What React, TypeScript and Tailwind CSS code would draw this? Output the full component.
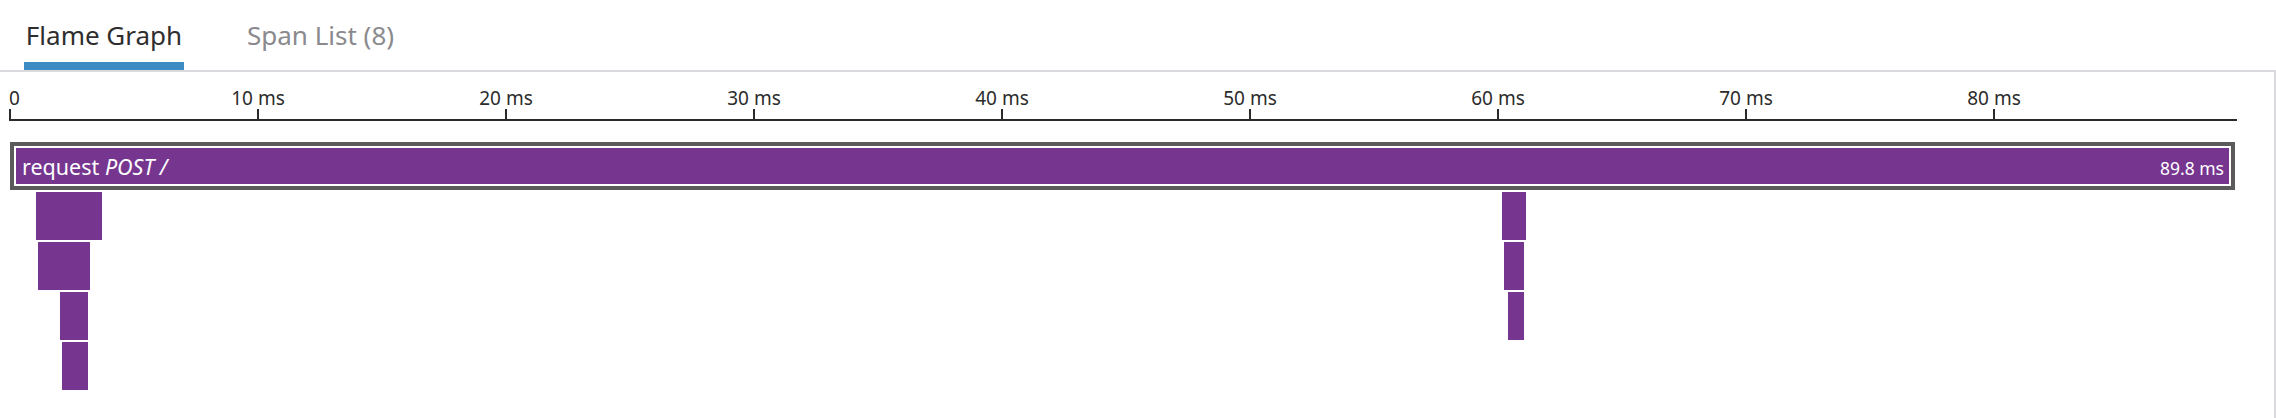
const PX_PER_MS = 24.8;
const X0 = 10;
const TOTAL_MS = 89.8;

const ticks = [0, 10, 20, 30, 40, 50, 60, 70, 80];

// child spans, row 1 sits right under the root span
const spans = [
  { id: "a", row: 1, start: 1.05, duration: 2.66 },
  { id: "b", row: 2, start: 1.13, duration: 2.1 },
  { id: "c", row: 3, start: 2.02, duration: 1.13 },
  { id: "d", row: 4, start: 2.1, duration: 1.05 },
  { id: "e", row: 1, start: 60.16, duration: 0.97 },
  { id: "f", row: 2, start: 60.24, duration: 0.81 },
  { id: "g", row: 3, start: 60.4, duration: 0.65 },
];

const toX = (ms: number) => X0 + ms * PX_PER_MS;

function FlameGraph() {
  const end = Math.round(toX(TOTAL_MS));

  return (
    <svg
      width={2272}
      height={346}
      className="block font-['Noto_Sans',sans-serif]"
    >
      {ticks.map((t) => {
        const x = Math.round(toX(t));
        return (
          <g key={t}>
            <rect x={x - 1} y={37} width={2} height={12} fill="#2b2b2b" />
            <text
              x={t === 0 ? x - 1 : x}
              y={33}
              textAnchor={t === 0 ? "start" : "middle"}
              fontSize={19}
              fill="#2b2b2b"
            >
              {t === 0 ? "0" : `${t} ms`}
            </text>
          </g>
        );
      })}
      <rect x={X0 - 1} y={47} width={end - X0 + 1} height={2} fill="#2b2b2b" />

      {/* root span, selected */}
      <rect x={X0} y={70} width={end - X0 - 2} height={48} fill="#5b5b5b" />
      <rect x={X0 + 4} y={74} width={end - X0 - 10} height={40} fill="#ffffff" />
      <rect x={X0 + 6} y={76} width={end - X0 - 14} height={36} fill="#763690" />
      <text x={22} y={103} fontSize={21.5} fill="#ffffff">
        request <tspan fontStyle="italic">POST /</tspan>
      </text>
      <text x={end - 13} y={103} textAnchor="end" fontSize={17.5} fill="#ffffff">
        89.8 ms
      </text>

      {spans.map((s) => (
        <rect
          key={s.id}
          x={Math.round(toX(s.start))}
          y={120 + 50 * (s.row - 1)}
          width={Math.round(s.duration * PX_PER_MS)}
          height={48}
          fill="#763690"
        />
      ))}
    </svg>
  );
}

export default function App() {
  return (
    <div className="flex h-[418px] w-[2276px] flex-col bg-white font-['Noto_Sans',sans-serif]">
      <div className="flex h-[70px] items-start">
        <button className="ml-[24px] flex w-[160px] flex-col items-center pt-[17px]">
          <span className="h-[36px] text-[26px] leading-[36px] text-[#2e2e2e]">
            Flame Graph
          </span>
          <span className="mt-[9px] h-[8px] w-full bg-[#3d8bc3]" />
        </button>
        <button className="ml-[63px] flex flex-col items-center pt-[17px]">
          <span className="h-[36px] text-[26px] leading-[36px] text-[#8a8a8e]">
            Span List (8)
          </span>
        </button>
      </div>
      <div className="flex-1 border-t-2 border-r-2 border-[#d9d9de]">
        <FlameGraph />
      </div>
    </div>
  );
}
